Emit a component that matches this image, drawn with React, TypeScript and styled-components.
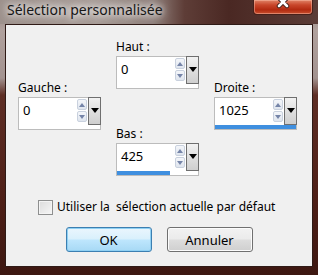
import styled, { createGlobalStyle } from "styled-components";

const GlobalStyle = createGlobalStyle`
  html, body {
    margin: 0;
    padding: 0;
  }
  body {
    width: 318px;
    height: 275px;
    overflow: hidden;
    font-family: "Noto Sans", "Open Sans", sans-serif;
  }
`;

const Window = styled.div`
  width: 318px;
  height: 275px;
  box-sizing: border-box;
  display: flex;
  flex-direction: column;
  background: linear-gradient(
    180deg,
    #8c7c77 0px,
    #b0a19d 30px,
    #a39390 78px,
    #5e2e25 95px,
    #4e1f17 200px,
    #3d1711 275px
  );
`;

const TitleBar = styled.div`
  height: 24px;
  flex-shrink: 0;
  display: flex;
  justify-content: space-between;
  align-items: flex-start;
  padding-left: 7px;
  background: linear-gradient(
    90deg,
    #9d918c 0%,
    #a79c97 30%,
    #8f807b 48%,
    #5e3d37 58%,
    #4a2823 72%,
    #5a3c37 100%
  );
`;

const Title = styled.span`
  margin-top: 1px;
  font-size: 14px;
  line-height: 17px;
  color: #161616;
  text-shadow: 0 0 6px #ffffff, 0 0 10px rgba(255, 255, 255, 0.85), 0 0 14px rgba(255, 255, 255, 0.6);
`;

const CloseButton = styled.div`
  width: 60px;
  height: 15px;
  margin-right: 5px;
  box-sizing: border-box;
  border: 1px solid #47201a;
  border-top: none;
  border-radius: 0 0 4px 4px;
  background: linear-gradient(180deg, #e08468 0%, #c9472b 35%, #b22a10 70%, #c8502e 100%);
  box-shadow: inset 0 0 0 1px rgba(255, 200, 180, 0.45);
  display: flex;
  justify-content: center;
  overflow: hidden;

  svg {
    margin-top: -5px;
  }
`;

const Client = styled.div`
  flex: 1;
  margin: 0 5px 8px 5px;
  box-sizing: border-box;
  border: 1px solid #2f1a16;
  background: #f0f0f0;
  display: flex;
  flex-direction: column;
  padding: 15px 0 0 12px;
`;

const FieldGrid = styled.div`
  display: flex;
  gap: 15px;
`;

const FieldColumn = styled.div<{ $offset?: number }>`
  display: flex;
  flex-direction: column;
  gap: 38px;
  margin-top: ${(p) => p.$offset ?? 0}px;
`;

const Field = styled.div`
  width: 83px;
  display: flex;
  flex-direction: column;
  gap: 2px;
`;

const Label = styled.label`
  font-size: 12px;
  line-height: 14px;
  color: #000;
`;

const SpinBox = styled.div`
  height: 33px;
  box-sizing: border-box;
  border: 1px solid #bcbcbc;
  background: #fff;
  display: flex;
  flex-direction: column;
`;

const SpinRow = styled.div`
  height: 28px;
  display: flex;
`;

const Value = styled.span`
  flex: 1;
  padding: 4px 0 0 4px;
  font-size: 13px;
  line-height: 16px;
  color: #000;
`;

const Spinner = styled.div`
  width: 10px;
  margin-top: 1px;
  display: flex;
  flex-direction: column;
  gap: 1px;
`;

const SpinArrow = styled.div<{ $down?: boolean }>`
  height: 11px;
  box-sizing: border-box;
  border: 1px solid #c9d1de;
  border-radius: 2px;
  background: linear-gradient(180deg, #f4f6fa 0%, #dfe5ee 100%);
  display: flex;
  align-items: center;
  justify-content: center;

  &::after {
    content: "";
    border-left: 3px solid transparent;
    border-right: 3px solid transparent;
    ${(p) => (p.$down ? "border-top: 4px solid #7584a8;" : "border-bottom: 4px solid #7584a8;")}
  }
`;

const DropButton = styled.div`
  width: 13px;
  height: 28px;
  margin: -1px -1px 0 1px;
  box-sizing: border-box;
  border: 1px solid #6f6f6f;
  background: linear-gradient(180deg, #f2f2f2 0%, #dcdcdc 60%, #cfcfcf 100%);
  display: flex;
  justify-content: center;
  padding-top: 10px;

  &::after {
    content: "";
    height: 0;
    border-left: 4px solid transparent;
    border-right: 4px solid transparent;
    border-top: 5px solid #000;
  }
`;

const Track = styled.div`
  height: 4px;
`;

const Fill = styled.div`
  height: 100%;
  background: #3f8fdf;
`;

const CheckRow = styled.label`
  display: flex;
  align-items: center;
  gap: 4px;
  margin: 23px 0 0 20px;
  font-size: 12px;
  line-height: 16px;
  color: #000;
  white-space: pre;
`;

const CheckBox = styled.span`
  width: 15px;
  height: 15px;
  box-sizing: border-box;
  border: 1px solid #8e8f8f;
  background: linear-gradient(135deg, #dcdcdc 0%, #f6f6f6 100%);
  box-shadow: inset 0 0 0 1px #f4f4f4;
`;

const ButtonRow = styled.div`
  display: flex;
  justify-content: center;
  gap: 15px;
  margin: 12px 12px 0 0;
`;

const Button = styled.button<{ $primary?: boolean }>`
  width: 86px;
  height: 25px;
  box-sizing: border-box;
  border-radius: 3px;
  font-family: inherit;
  font-size: 13px;
  color: #000;
  padding: 0;
  border: 1px solid ${(p) => (p.$primary ? "#3c7fb1" : "#707070")};
  background: ${(p) =>
    p.$primary
      ? "linear-gradient(180deg, #eaf6fd 0%, #d9f0fc 48%, #bee6fd 52%, #a7d9f5 100%)"
      : "linear-gradient(180deg, #f2f2f2 0%, #ebebeb 48%, #dddddd 52%, #cfcfcf 100%)"};
  box-shadow: inset 0 0 0 1px ${(p) => (p.$primary ? "#8fd0f3" : "#fcfcfc")};
`;

interface SpinFieldProps {
  label: string;
  value: string;
  fill?: number;
}

function SpinField({ label, value, fill }: SpinFieldProps) {
  return (
    <Field>
      <Label>{label}</Label>
      <SpinBox>
        <SpinRow>
          <Value>{value}</Value>
          <Spinner>
            <SpinArrow />
            <SpinArrow $down />
          </Spinner>
          <DropButton />
        </SpinRow>
        <Track>{fill !== undefined && <Fill style={{ width: `${fill}%` }} />}</Track>
      </SpinBox>
    </Field>
  );
}

function App() {
  return (
    <Window>
      <GlobalStyle />
      <TitleBar>
        <Title>Sélection personnalisée</Title>
        <CloseButton>
          <svg width="14" height="14" viewBox="0 0 14 14">
            <path d="M3 3 L11 11 M11 3 L3 11" stroke="#3a1a14" strokeWidth="4.5" strokeLinecap="round" />
            <path d="M3 3 L11 11 M11 3 L3 11" stroke="#fff" strokeWidth="2.6" strokeLinecap="round" />
          </svg>
        </CloseButton>
      </TitleBar>
      <Client>
        <FieldGrid>
          <FieldColumn $offset={41}>
            <SpinField label="Gauche :" value="0" />
          </FieldColumn>
          <FieldColumn>
            <SpinField label="Haut :" value="0" />
            <SpinField label="Bas :" value="425" fill={66} />
          </FieldColumn>
          <FieldColumn $offset={41}>
            <SpinField label="Droite :" value="1025" fill={100} />
          </FieldColumn>
        </FieldGrid>
        <CheckRow>
          <CheckBox />
          {"Utiliser la  sélection actuelle par défaut"}
        </CheckRow>
        <ButtonRow>
          <Button $primary>OK</Button>
          <Button>Annuler</Button>
        </ButtonRow>
      </Client>
    </Window>
  );
}

export default App;
